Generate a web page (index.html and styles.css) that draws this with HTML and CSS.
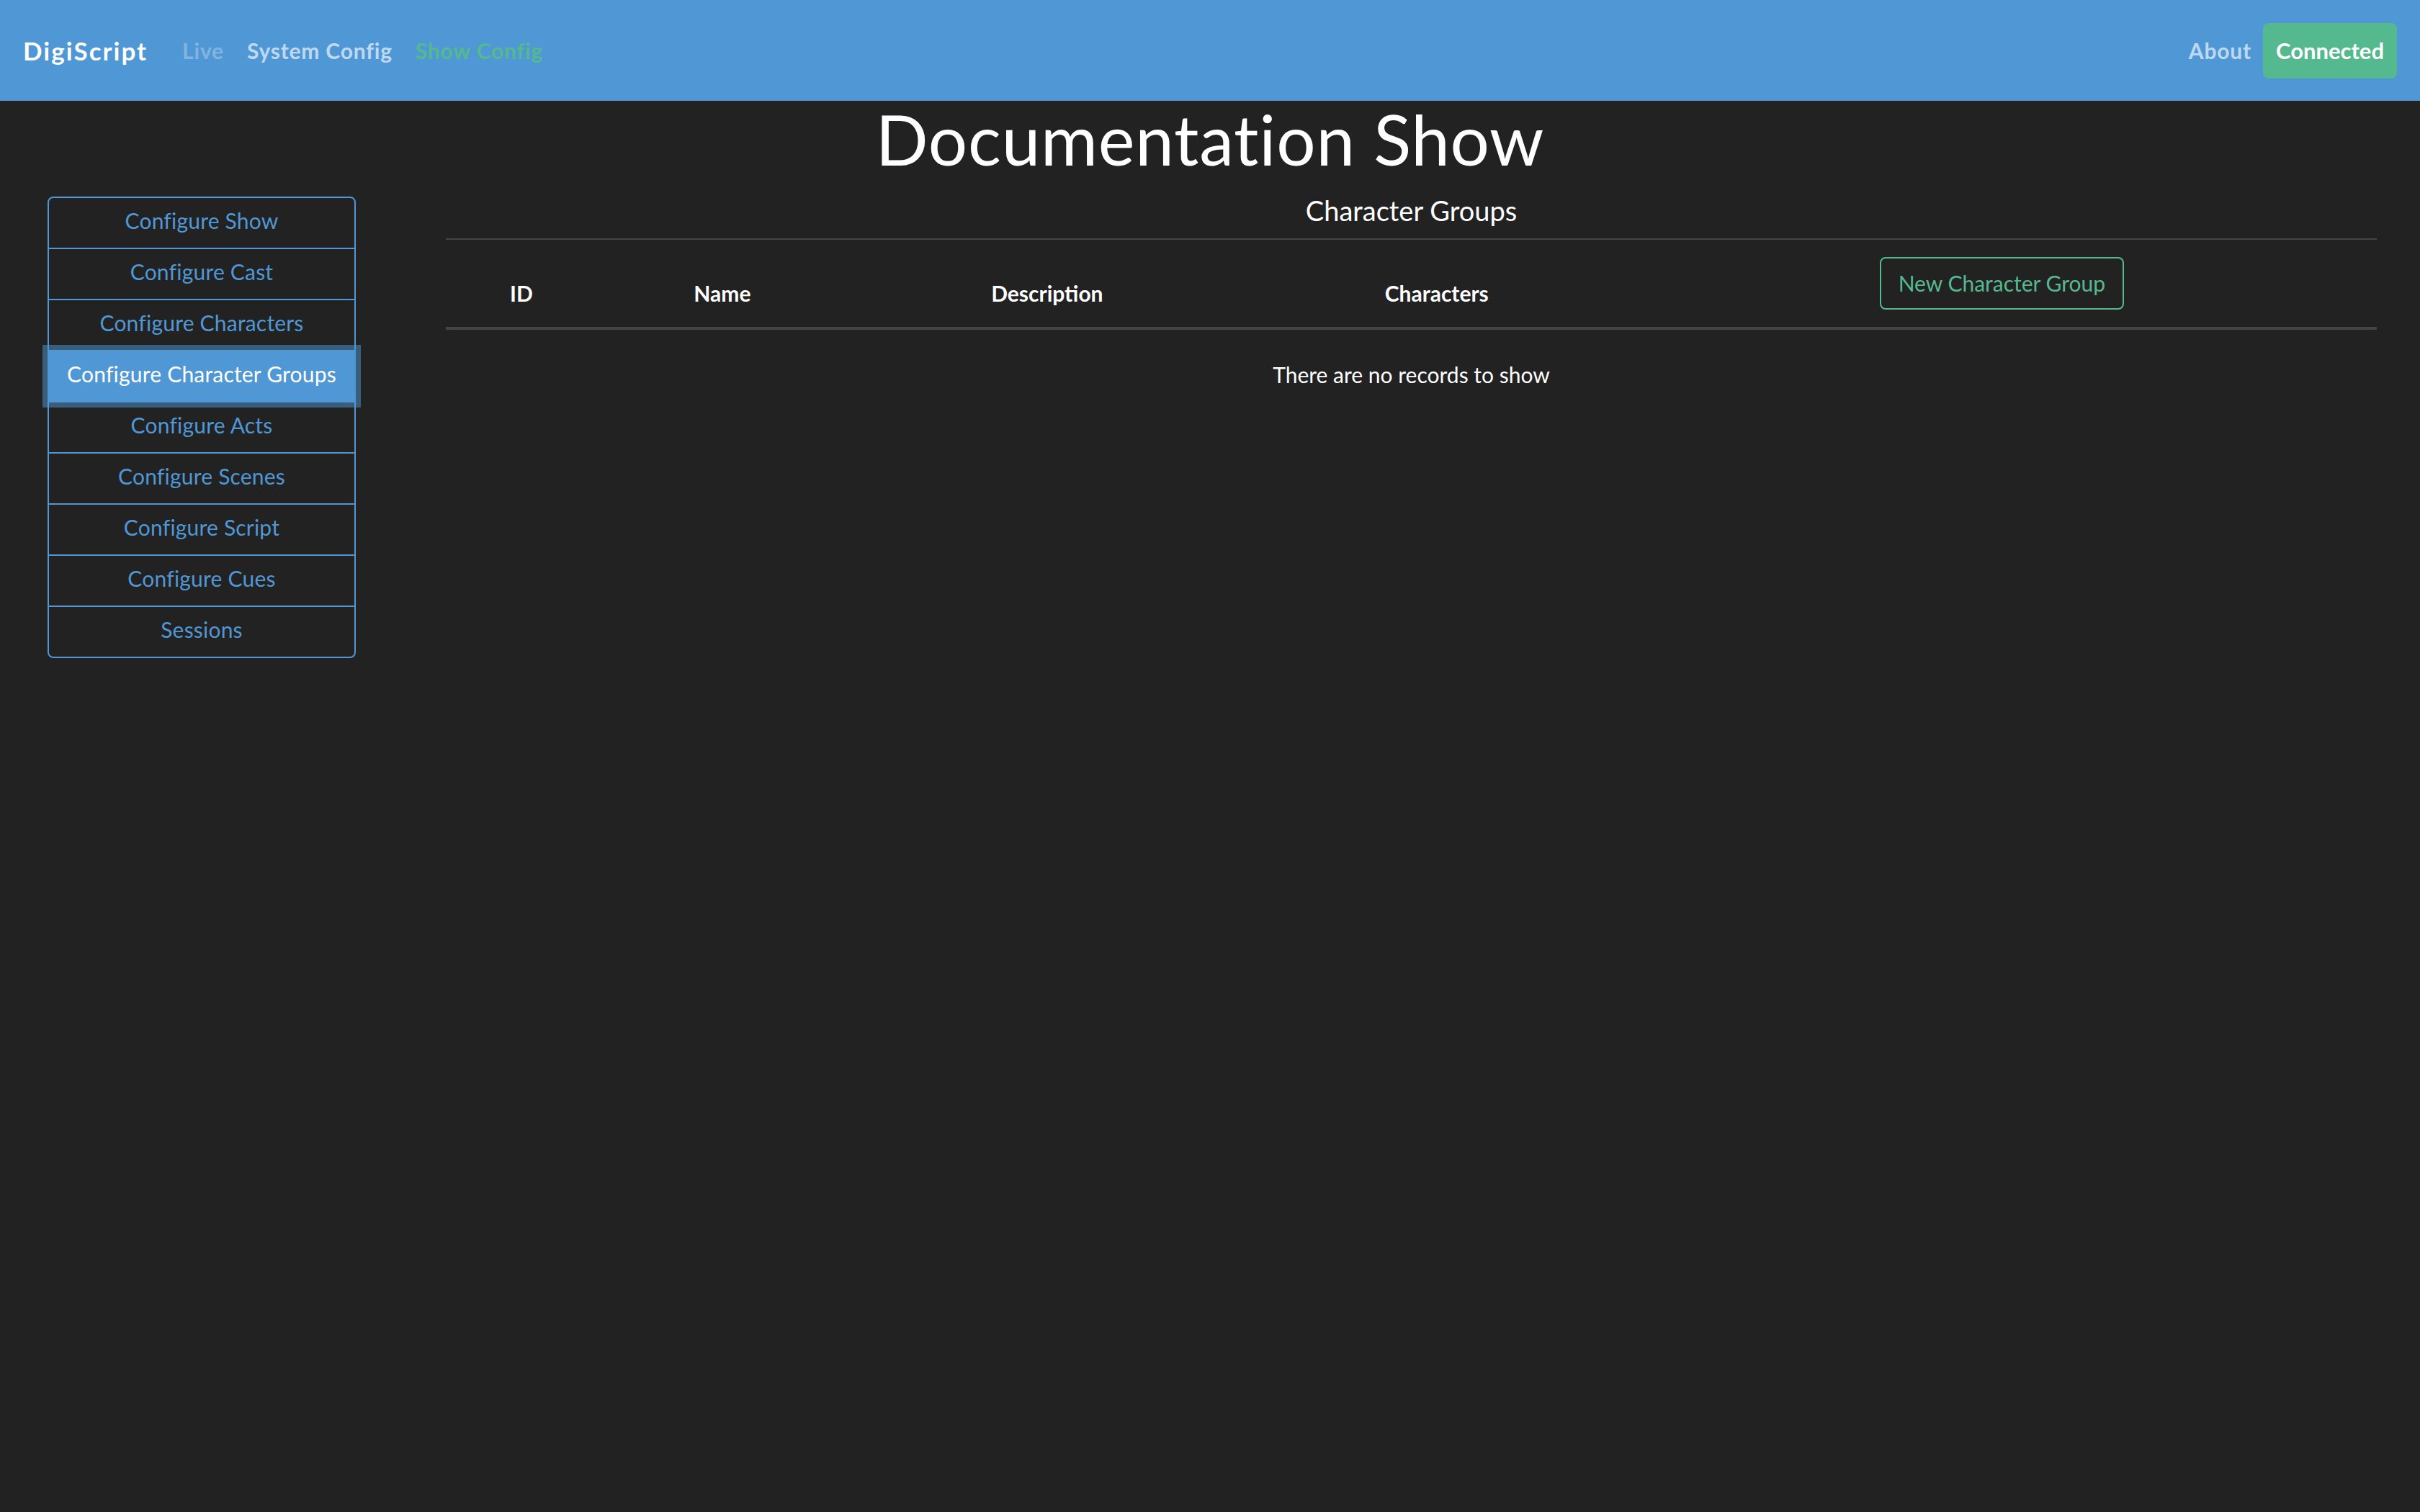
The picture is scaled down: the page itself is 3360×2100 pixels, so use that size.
FILE: index.html
```html
<!DOCTYPE html>
<html lang="en">
<head>
<meta charset="utf-8">
<title>DigiScript</title>
<link rel="stylesheet" href="styles.css">
</head>
<body>
<nav class="navbar">
  <a class="brand" href="#">DigiScript</a>
  <ul class="nav-left">
    <li><a class="nav-link disabled" href="#">Live</a></li>
    <li><a class="nav-link" href="#">System Config</a></li>
    <li><a class="nav-link active" href="#">Show Config</a></li>
  </ul>
  <div class="nav-right">
    <a class="nav-link" href="#">About</a>
    <button class="btn-connected" type="button">Connected</button>
  </div>
</nav>
<div class="page">
  <h1 class="title">Documentation Show</h1>
  <div class="row">
    <div class="side-col">
      <div class="list-group">
        <a class="list-item" href="#">Configure Show</a>
        <a class="list-item" href="#">Configure Cast</a>
        <a class="list-item" href="#">Configure Characters</a>
        <a class="list-item active" href="#">Configure Character Groups</a>
        <a class="list-item" href="#">Configure Acts</a>
        <a class="list-item" href="#">Configure Scenes</a>
        <a class="list-item" href="#">Configure Script</a>
        <a class="list-item" href="#">Configure Cues</a>
        <a class="list-item" href="#">Sessions</a>
      </div>
    </div>
    <div class="main-col">
      <h5 class="section-title">Character Groups</h5>
      <table class="data-table">
        <colgroup>
          <col class="c-id">
          <col class="c-name">
          <col class="c-desc">
          <col class="c-chars">
          <col class="c-btn">
        </colgroup>
        <thead>
          <tr>
            <th>ID</th>
            <th>Name</th>
            <th>Description</th>
            <th>Characters</th>
            <th><button class="btn-outline" type="button">New Character Group</button></th>
          </tr>
        </thead>
        <tbody>
          <tr class="empty-row">
            <td colspan="5"><div class="empty-text">There are no records to show</div></td>
          </tr>
        </tbody>
      </table>
    </div>
  </div>
</div>
</body>
</html>
```
FILE: styles.css
```css
* { box-sizing: border-box; }
html, body {
  margin: 0;
  padding: 0;
  background: #222222;
  color: #ffffff;
  font-family: "Lato", "Liberation Sans", sans-serif;
  font-size: 30px;
  line-height: 1.5;
}
a { text-decoration: none; }

.navbar {
  height: 140px;
  background: #5097d5;
  display: flex;
  align-items: center;
  padding: 0 32px;
}
.brand {
  color: #ffffff;
  font-size: 35px;
  font-weight: 700;
  letter-spacing: 2px;
  margin-right: 32px;
  line-height: 1.5;
}
.nav-left {
  list-style: none;
  margin: 0;
  padding: 0;
  display: flex;
  flex: 1;
}
.nav-link {
  display: block;
  padding: 16px;
  font-size: 30px;
  font-weight: 700;
  letter-spacing: 0.8px;
  color: rgba(255, 255, 255, 0.65);
  line-height: 45px;
}
.nav-link.disabled { color: rgba(255, 255, 255, 0.3); }
.nav-link.active { color: #55b98f; }
.nav-right {
  display: flex;
  align-items: center;
}
.btn-connected {
  font-family: inherit;
  font-size: 31px;
  font-weight: 700;
  line-height: 45px;
  color: #ffffff;
  background: #55b98f;
  border: 2px solid #55b98f;
  border-radius: 8px;
  padding: 14px 16px;
}

.page { padding: 0; }
.title {
  margin: 0 0 24px;
  text-align: center;
  font-size: 96px;
  font-weight: 400;
  letter-spacing: 0.8px;
  line-height: 1.1;
}
.row { display: flex; }
.side-col {
  width: 560px;
  flex: none;
  display: flex;
  justify-content: center;
  align-items: flex-start;
  padding: 3px 30px 0;
}
.list-group {
  display: flex;
  flex-direction: column;
  width: 428px;
}
.list-item {
  display: block;
  text-align: center;
  color: #5097d5;
  border: 2px solid #5097d5;
  padding: 9px 10px 15px;
  line-height: 45px;
  font-size: 30px;
  letter-spacing: 0.2px;
  margin-top: -2px;
  white-space: nowrap;
}
.list-item:first-child {
  margin-top: 0;
  border-top-left-radius: 8px;
  border-top-right-radius: 8px;
}
.list-item:last-child {
  border-bottom-left-radius: 8px;
  border-bottom-right-radius: 8px;
}
.list-item.active {
  position: relative;
  z-index: 2;
  color: #ffffff;
  background: #5097d5;
  box-shadow: 0 0 0 7px rgba(80, 151, 213, 0.5);
}

.main-col {
  flex: 1;
  padding: 0 60px 0 59px;
}
.section-title {
  margin: 0 0 16px;
  text-align: center;
  font-size: 38px;
  font-weight: 400;
  line-height: 1.2;
}
.data-table {
  width: 100%;
  border-collapse: collapse;
  color: #ffffff;
}
.c-id { width: 7.83%; }
.c-name { width: 12.98%; }
.c-desc { width: 20.66%; }
.c-chars { width: 19.69%; }
.c-btn { width: 38.84%; }
.data-table th {
  padding: 24px;
  border-top: 2px solid #444444;
  border-bottom: 4px solid #444444;
  vertical-align: bottom;
  text-align: center;
  font-weight: 700;
  font-size: 30px;
  line-height: 45px;
}
.data-table td {
  padding: 24px;
  border-top: 2px solid #444444;
  text-align: center;
  font-size: 30px;
  line-height: 45px;
}
.empty-text { margin: 16px 0; }
.btn-outline {
  font-family: inherit;
  font-size: 30px;
  font-weight: 400;
  line-height: 45px;
  color: #55b98f;
  background: transparent;
  border: 2px solid #55b98f;
  border-radius: 8px;
  padding: 12px 24px;
}
```
